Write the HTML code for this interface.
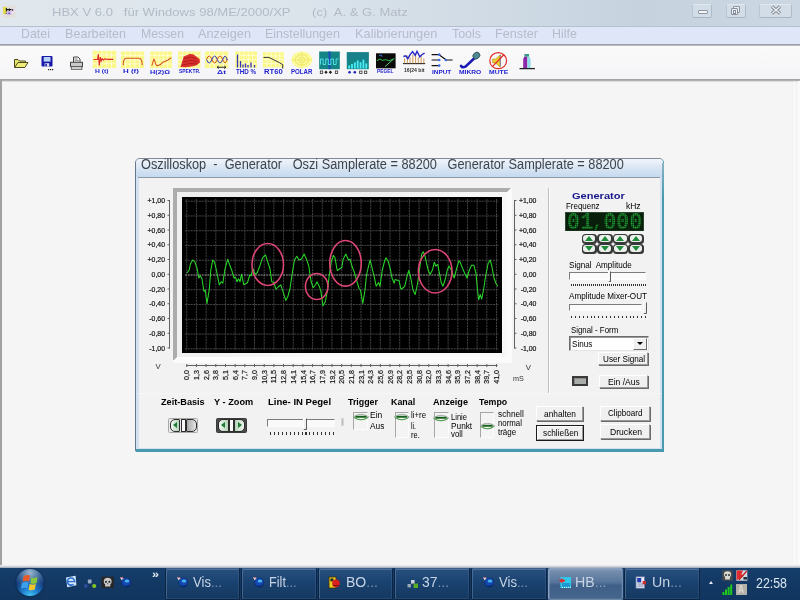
<!DOCTYPE html><html><head><meta charset="utf-8"><title>HBX V 6.0</title><style>
*{margin:0;padding:0;box-sizing:border-box}
html,body{width:800px;height:600px;overflow:hidden;background:#f5f5f5}
body{position:relative;font-family:"Liberation Sans",sans-serif;font-size:11px;color:#000}
.a{position:absolute}
.t{position:absolute;white-space:pre;line-height:1;transform-origin:0 50%}
.btn{position:absolute;background:#f0f0f0;border:1px solid;border-color:#fff #9a9a9a #9a9a9a #fff;box-shadow:1px 1px 0 #6a6a6a}
.tb{position:absolute;top:568px;height:32px;width:75.6px;border:1px solid #0c2444;border-top-color:#3c5e88;border-radius:2px;background:linear-gradient(#28507f,#1a4270 45%,#14385f);box-shadow:inset 1px 1px 0 rgba(160,190,220,.30),inset -1px -1px 0 rgba(160,190,220,.12)}
</style></head><body><div id="w" style="position:absolute;left:0;top:0;width:800px;height:600px;will-change:transform">
<div class="a" style="left:0;top:0;width:800px;height:26px;background:linear-gradient(90deg,#e0e8ed 0%,#dce5ec 35%,#d0dbe5 60%,#c6d3df 80%,#cbd7e2 100%)"></div>
<div class="a" style="left:0;top:26px;width:800px;height:1px;background:#b4c0cf"></div>
<div class="t" style="left:52.00px;top:6.77px;font-size:11.4px;color:#b3bac6;transform:scaleX(1.1452);">HBX V 6.0   für Windows 98/ME/2000/XP      (c)  A. &amp; G. Matz</div>
<div class="a" style="left:0;top:27px;width:800px;height:17px;background:#dfe6f7"></div>
<div class="a" style="left:0;top:43.6px;width:800px;height:2.2px;background:linear-gradient(#8c9098,#c6cad0)"></div>
<div class="t" style="left:21.00px;top:27.66px;font-size:12.4px;color:#b6bcca;transform:scaleX(1.0018);">Datei</div>
<div class="t" style="left:65.00px;top:27.66px;font-size:12.4px;color:#b6bcca;transform:scaleX(1.0170);">Bearbeiten</div>
<div class="t" style="left:141.00px;top:27.66px;font-size:12.4px;color:#b6bcca;transform:scaleX(0.9904);">Messen</div>
<div class="t" style="left:198.00px;top:27.66px;font-size:12.4px;color:#b6bcca;transform:scaleX(1.0250);">Anzeigen</div>
<div class="t" style="left:265.00px;top:27.66px;font-size:12.4px;color:#b6bcca;transform:scaleX(1.0073);">Einstellungen</div>
<div class="t" style="left:354.50px;top:27.66px;font-size:12.4px;color:#b6bcca;transform:scaleX(1.0317);">Kalibrierungen</div>
<div class="t" style="left:452.00px;top:27.66px;font-size:12.4px;color:#b6bcca;transform:scaleX(1.0018);">Tools</div>
<div class="t" style="left:495.00px;top:27.66px;font-size:12.4px;color:#b6bcca;transform:scaleX(1.0229);">Fenster</div>
<div class="t" style="left:552.00px;top:27.66px;font-size:12.4px;color:#b6bcca;transform:scaleX(1.0078);">Hilfe</div>
<div class="a" style="left:0;top:46px;width:800px;height:33px;background:linear-gradient(#fafafb,#f5f5f7)"></div>
<div class="a" style="left:0;top:78.6px;width:800px;height:2px;background:linear-gradient(#9c9c9c,#b8b8b8)"></div>
<div class="a" style="left:0;top:80.5px;width:800px;height:1px;background:#dcdcdc"></div>
<div class="a" style="left:0;top:80px;width:1.7px;height:485.5px;background:#a2a2a2"></div>
<div class="a" style="left:0;top:565px;width:800px;height:3px;background:linear-gradient(#f0f0f0,#dcdee2 40%,#98a4b4)"></div>
<div class="a" style="left:0;top:568px;width:800px;height:32px;background:linear-gradient(#173f6c,#123863 50%,#11355e)"></div>
<div class="a" style="left:692px;top:4px;width:20px;height:14px;border-radius:2px;background:#d3dde7;border:1px solid;border-color:#dfe7ef #aebbc9 #a8b6c4 #b9c5d2"></div>
<div class="a" style="left:697.5px;top:9.5px;width:10px;height:4.5px;background:#f4f6f8;border:1px solid #8c95a1;border-radius:1px"></div>
<div class="a" style="left:726px;top:4px;width:20px;height:14px;border-radius:2px;background:#d3dde7;border:1px solid;border-color:#dfe7ef #aebbc9 #a8b6c4 #b9c5d2"></div>
<div class="a" style="left:733px;top:5.5px;width:7px;height:7px;background:#eef1f4;border:1px solid #8c95a1;border-radius:1px"></div>
<div class="a" style="left:730.5px;top:8px;width:7px;height:7px;background:#eef1f4;border:1px solid #868f9b;border-radius:1px"></div>
<div class="a" style="left:733px;top:10px;width:2.5px;height:3.5px;border:1px solid #868f9b"></div>
<div class="a" style="left:759px;top:4px;width:33px;height:14px;border-radius:2px;background:#d3dde7;border:1px solid;border-color:#dfe7ef #aebbc9 #a8b6c4 #b9c5d2"></div>
<svg class="a" style="left:770px;top:5px" width="12" height="10" viewBox="0 0 12 10"><path d="M2 1.5 L10 8.5 M10 1.5 L2 8.5" stroke="#7f8894" stroke-width="3.2" fill="none"/><path d="M2.3 1.8 L9.7 8.2 M9.7 1.8 L2.3 8.2" stroke="#f2f4f6" stroke-width="1.3" fill="none"/></svg>
<svg class="a" style="left:2px;top:5px" width="14" height="13" viewBox="0 0 14 13"><rect x=".5" y=".5" width="13" height="12" fill="#e2ddd2" opacity=".8"/><rect x="1" y="2" width="4" height="7" fill="#e4dc54"/><rect x="5" y="6" width="4.4" height="4" fill="#d2b8ec"/><rect x="9" y="3" width="4" height="6" fill="#e8dcea"/><path d="M4 4.6h5.6M4.4 3v3.4M7.4 3.4v2.6M10.6 4.2v1.6" stroke="#1c1c1c" stroke-width="1.1"/><path d="M3.6 8.4h1.2M6.4 8.2h1.6" stroke="#3030a0" stroke-width="1"/></svg>
<div class="a" style="left:794px;top:81px;width:1px;height:484px;background:#fbfbfb"></div><div class="a" style="left:798px;top:81px;width:2px;height:484px;background:#fafafa"></div>
<svg class="a" style="left:0;top:0" width="800" height="84" viewBox="0 0 800 84">
<path d="M14.5 67.5 V59.5 h3.5 l1.5 1.5 h6 v2" fill="#e9e36a" stroke="#4a4a20" stroke-width="1"/><path d="M14.5 67.5 l3.5 -5 h10 l-3.2 5 z" fill="#f0ea78" stroke="#4a4a20" stroke-width="1" stroke-linejoin="round"/>
<rect x="41.5" y="56" width="11" height="10.5" rx="1" fill="#1818a8"/><rect x="43.7" y="57" width="6.8" height="4.6" fill="#b8d4f4"/><rect x="44.6" y="63.2" width="4.6" height="3.3" fill="#dfe6f2"/><rect x="45.3" y="63.8" width="1.6" height="2.4" fill="#1818a8"/>
<rect x="48" y="69" width="1.2" height="1.2" fill="#222"/><rect x="50" y="69" width="1.2" height="1.2" fill="#222"/><rect x="52" y="69" width="1.2" height="1.2" fill="#222"/>
<path d="M73.5 62.5 v-5.5 h4.5 l2 2 v3.5" fill="#fff" stroke="#444" stroke-width="1"/><path d="M74.5 59h3M74.5 60.8h4.4" stroke="#555" stroke-width=".8"/><rect x="70.5" y="62.3" width="12" height="4.2" fill="#c9c9c9" stroke="#444" stroke-width="1"/><rect x="71.3" y="66.7" width="10.6" height="2.6" fill="#e2e2e2" stroke="#555" stroke-width=".9"/>
<rect x="92.7" y="50.8" width="23.5" height="17.200000000000003" fill="#fbf88a"/><path d="M97.4 50.8V68" stroke="#fffde0" stroke-width="1" opacity=".75"/><path d="M102.1 50.8V68" stroke="#fffde0" stroke-width="1" opacity=".75"/><path d="M106.8 50.8V68" stroke="#fffde0" stroke-width="1" opacity=".75"/><path d="M111.5 50.8V68" stroke="#fffde0" stroke-width="1" opacity=".75"/><path d="M92.7 55.1H116.2" stroke="#fffde0" stroke-width="1" opacity=".75"/><path d="M92.7 59.4H116.2" stroke="#fffde0" stroke-width="1" opacity=".75"/><path d="M92.7 63.7H116.2" stroke="#fffde0" stroke-width="1" opacity=".75"/>
<path d="M93.5 59.5 h4 l.8 -5.5 l1 11.5 l1 -8.5 l.9 4 l.9 -2.2 l1.2 1.2 q2 -2 3.5 -.6 h6.5" fill="none" stroke="#e02a2a" stroke-width="1.1"/>
<rect x="121" y="51.5" width="23.19999999999999" height="16.5" fill="#fbf88a"/><path d="M125.6 51.5V68" stroke="#fffde0" stroke-width="1" opacity=".75"/><path d="M130.3 51.5V68" stroke="#fffde0" stroke-width="1" opacity=".75"/><path d="M134.9 51.5V68" stroke="#fffde0" stroke-width="1" opacity=".75"/><path d="M139.6 51.5V68" stroke="#fffde0" stroke-width="1" opacity=".75"/><path d="M121 55.6H144.2" stroke="#fffde0" stroke-width="1" opacity=".75"/><path d="M121 59.8H144.2" stroke="#fffde0" stroke-width="1" opacity=".75"/><path d="M121 63.9H144.2" stroke="#fffde0" stroke-width="1" opacity=".75"/>
<path d="M123.3 65.2 v-2.4 q.4 -4.6 3.6 -4.6 h11.6 q3.2 0 3.6 4.6 v2.4" fill="none" stroke="#d8541c" stroke-width="1.1"/>
<rect x="150.2" y="51.5" width="21.80000000000001" height="16.5" fill="#fbf88a"/><path d="M154.6 51.5V68" stroke="#fffde0" stroke-width="1" opacity=".75"/><path d="M158.9 51.5V68" stroke="#fffde0" stroke-width="1" opacity=".75"/><path d="M163.3 51.5V68" stroke="#fffde0" stroke-width="1" opacity=".75"/><path d="M167.6 51.5V68" stroke="#fffde0" stroke-width="1" opacity=".75"/><path d="M150.2 55.6H172" stroke="#fffde0" stroke-width="1" opacity=".75"/><path d="M150.2 59.8H172" stroke="#fffde0" stroke-width="1" opacity=".75"/><path d="M150.2 63.9H172" stroke="#fffde0" stroke-width="1" opacity=".75"/>
<path d="M151.5 65.5 q1 -.3 1.6 -4 q.8 -5 1.8 -.2 q.9 4.5 2.6 4.3 q2.6 0 5 -3 q3 -1.5 5 -2.4 q2.3 -1.2 3.8 -2.6" fill="none" stroke="#d8541c" stroke-width="1.1"/>
<rect x="178" y="51.5" width="22.5" height="16.5" fill="#fbf88a"/><path d="M182.5 51.5V68" stroke="#fffde0" stroke-width="1" opacity=".75"/><path d="M187.0 51.5V68" stroke="#fffde0" stroke-width="1" opacity=".75"/><path d="M191.5 51.5V68" stroke="#fffde0" stroke-width="1" opacity=".75"/><path d="M196.0 51.5V68" stroke="#fffde0" stroke-width="1" opacity=".75"/><path d="M178 55.6H200.5" stroke="#fffde0" stroke-width="1" opacity=".75"/><path d="M178 59.8H200.5" stroke="#fffde0" stroke-width="1" opacity=".75"/><path d="M178 63.9H200.5" stroke="#fffde0" stroke-width="1" opacity=".75"/>
<path d="M180.5 67 l3.2 -10.5 l3 -1.2 l3.5 -1.6 l3.4 .8 l3.4 2.6 l2.6 2 l.4 3.4 l-3.4 2.8 l-5 1.2 l-6 .7 z" fill="#d8302c"/><path d="M184 58.5 l7 -1.5 l5 2 M183 62 l8 -1.6 l6 1.4 M182 65 l8 -1.5 l7 .4" stroke="#a01414" stroke-width=".7" fill="none"/>
<rect x="205" y="51.5" width="23.19999999999999" height="16.5" fill="#fbf88a"/><path d="M209.6 51.5V68" stroke="#fffde0" stroke-width="1" opacity=".75"/><path d="M214.3 51.5V68" stroke="#fffde0" stroke-width="1" opacity=".75"/><path d="M218.9 51.5V68" stroke="#fffde0" stroke-width="1" opacity=".75"/><path d="M223.6 51.5V68" stroke="#fffde0" stroke-width="1" opacity=".75"/><path d="M205 55.6H228.2" stroke="#fffde0" stroke-width="1" opacity=".75"/><path d="M205 59.8H228.2" stroke="#fffde0" stroke-width="1" opacity=".75"/><path d="M205 63.9H228.2" stroke="#fffde0" stroke-width="1" opacity=".75"/>
<path d="M206.5 59.5 q2.7 -7 5.4 0 t5.4 0 t5.4 0 t4.6 -.6" fill="none" stroke="#d8541c" stroke-width="1"/><path d="M206.5 59.5 q2.7 7 5.4 0 t5.4 0 t5.4 0 t4.6 .6" fill="none" stroke="#3838c0" stroke-width="1"/><path d="M217 67.3 h9 M218.8 66 l-1.8 1.3 l1.8 1.3 M224.2 66 l1.8 1.3 l-1.8 1.3" stroke="#222" stroke-width=".9" fill="none"/>
<rect x="235.2" y="51.5" width="21.80000000000001" height="16.200000000000003" fill="#fbf88a"/><path d="M239.6 51.5V67.7" stroke="#fffde0" stroke-width="1" opacity=".75"/><path d="M243.9 51.5V67.7" stroke="#fffde0" stroke-width="1" opacity=".75"/><path d="M248.3 51.5V67.7" stroke="#fffde0" stroke-width="1" opacity=".75"/><path d="M252.6 51.5V67.7" stroke="#fffde0" stroke-width="1" opacity=".75"/><path d="M235.2 55.5H257" stroke="#fffde0" stroke-width="1" opacity=".75"/><path d="M235.2 59.6H257" stroke="#fffde0" stroke-width="1" opacity=".75"/><path d="M235.2 63.7H257" stroke="#fffde0" stroke-width="1" opacity=".75"/>
<path d="M237.5 67.5 v-13 M240.5 67.5 v-6.5 M243 67.5 v-3 M245.5 67.5 v-4 M248 67.5 v-2.5 M251 67.5 v-5 M254.5 67.5 v-2.4" stroke="#3434b8" stroke-width="1.3"/>
<rect x="262.7" y="52.2" width="21.30000000000001" height="15.200000000000003" fill="#fbf88a"/><path d="M267.0 52.2V67.4" stroke="#fffde0" stroke-width="1" opacity=".75"/><path d="M271.2 52.2V67.4" stroke="#fffde0" stroke-width="1" opacity=".75"/><path d="M275.5 52.2V67.4" stroke="#fffde0" stroke-width="1" opacity=".75"/><path d="M279.7 52.2V67.4" stroke="#fffde0" stroke-width="1" opacity=".75"/><path d="M262.7 56.0H284" stroke="#fffde0" stroke-width="1" opacity=".75"/><path d="M262.7 59.8H284" stroke="#fffde0" stroke-width="1" opacity=".75"/><path d="M262.7 63.6H284" stroke="#fffde0" stroke-width="1" opacity=".75"/>
<path d="M263.5 57.4 h5.4 l10.4 5.2 l3.4 2 v4" fill="none" stroke="#333" stroke-width="1"/>
<ellipse cx="301.8" cy="59.8" rx="10.4" ry="8.3" fill="#fbf99a"/><ellipse cx="301.8" cy="59.8" rx="6.6" ry="5.2" fill="none" stroke="#ece25c" stroke-width=".9"/><ellipse cx="301.8" cy="59.8" rx="3.2" ry="2.6" fill="none" stroke="#ece25c" stroke-width=".9"/><path d="M291.4 59.8h20.8M301.8 51.5v16.6" stroke="#f0e868" stroke-width=".8"/>
<rect x="319.2" y="51.5" width="20.6" height="17.7" fill="#148484"/><rect x="328.3" y="51.5" width="2.4" height="17.7" fill="#1a54b4"/><path d="M320.5 64.5 v-5.5 h2.6 v5.5 h2.6 v-5.5 h2.6 v5.5 h2.6 v-5.5 h2.6 v5.5 h2.6 v-5.5 h2.4" fill="none" stroke="#58e8f8" stroke-width=".9"/>
<rect x="320.3" y="71" width="2.4" height="2.4" fill="none" stroke="#333" stroke-width=".8"/><path d="M326 70.6l1.7 1.7l-1.7 1.7l-1.7 -1.7z M330.4 70.6l1.7 1.7l-1.7 1.7l-1.7 -1.7z" fill="#222"/><rect x="335.3" y="71" width="2.4" height="2.4" fill="none" stroke="#333" stroke-width=".8"/>
<rect x="346.8" y="52.2" width="22" height="17" fill="#148484"/><rect x="346.8" y="52.2" width="22" height="8" fill="#1c7c90" opacity=".5"/>
<rect x="348.20" y="65.40" width="1.9" height="3.2" fill="#48e8f4"/>
<rect x="351.05" y="64.00" width="1.9" height="4.6" fill="#48e8f4"/>
<rect x="353.90" y="62.40" width="1.9" height="6.2" fill="#48e8f4"/>
<rect x="356.75" y="60.40" width="1.9" height="8.2" fill="#48e8f4"/>
<rect x="359.60" y="62.20" width="1.9" height="6.4" fill="#48e8f4"/>
<rect x="362.45" y="59.60" width="1.9" height="9" fill="#48e8f4"/>
<rect x="365.30" y="63.40" width="1.9" height="5.2" fill="#48e8f4"/>
<circle cx="349.6" cy="72.3" r="1.3" fill="#1c1cc0"/><circle cx="354.8" cy="72.3" r="1.3" fill="#1c1cc0"/><rect x="359.6" y="71.1" width="2.4" height="2.4" fill="none" stroke="#333" stroke-width=".8"/><rect x="364.4" y="71.1" width="2.4" height="2.4" fill="none" stroke="#333" stroke-width=".8"/>
<rect x="376" y="53.3" width="19.6" height="15" fill="#0a0a0a"/><path d="M377 60.6 l3 -1.6 l2.4 1.4 l3.4 -.8 l3.2 1.2 l5.4 -2.2" fill="none" stroke="#30c050" stroke-width="1"/><path d="M385 66.6 l8.4 -7.4" stroke="#60d878" stroke-width=".9"/><path d="M379 55.8 l2.4 -.8 l.6 1.8" stroke="#3c78e0" stroke-width=".9" fill="none"/>
<path d="M403 63.6 h22.2" stroke="#222" stroke-width="1.1"/>
<path d="M404.60 63.4 v-5" stroke="#c89048" stroke-width=".9"/>
<path d="M407.35 63.4 v-8" stroke="#c89048" stroke-width=".9"/>
<path d="M410.10 63.4 v-6" stroke="#c89048" stroke-width=".9"/>
<path d="M412.85 63.4 v-9" stroke="#c89048" stroke-width=".9"/>
<path d="M415.60 63.4 v-10" stroke="#c89048" stroke-width=".9"/>
<path d="M418.35 63.4 v-6" stroke="#c89048" stroke-width=".9"/>
<path d="M421.10 63.4 v-8" stroke="#c89048" stroke-width=".9"/>
<path d="M423.85 63.4 v-5" stroke="#c89048" stroke-width=".9"/>
<path d="M403.4 56.5 l2.4 -.6 l2 2.8 l2.6 -4.6 l2.2 -2.4 l2.6 3.6 l1.8 -4 l2.8 5.6 l2.2 -2.4 l2.6 -1.4" fill="none" stroke="#2626c8" stroke-width="1.4"/>
<path d="M431.6 54.6 h7 M431.6 60 h7 M431.6 65.6 h7 M446 60 h6.6 M439 54.8 l7 5" stroke="#111" stroke-width="1.2" fill="none"/><circle cx="439.2" cy="54.6" r="1.3" fill="#3c6ce0"/><circle cx="439.2" cy="60" r="1.3" fill="#3c6ce0"/><circle cx="439.2" cy="65.6" r="1.3" fill="#3c6ce0"/><circle cx="445.8" cy="60" r="1.3" fill="#3c6ce0"/>
<path d="M461 65.8 q1.2 2.4 4.4 .8 l9.2 -8.6" fill="none" stroke="#1a1ab4" stroke-width="2.6" stroke-linecap="round"/><ellipse cx="476.4" cy="55.6" rx="3.7" ry="3.1" transform="rotate(-40 476.4 55.6)" fill="#4f8890" stroke="#2c5058" stroke-width=".8"/>
<path d="M492.6 59 h3 l4.6 -4.2 v12.4 l-4.6 -4.2 h-3 z" fill="#f0d030" stroke="#b08810" stroke-width=".6"/><path d="M500.4 55 v11.6" stroke="#8a8a8a" stroke-width="1.2"/><ellipse cx="498.2" cy="60.7" rx="8.4" ry="8" fill="none" stroke="#e02828" stroke-width="1.2"/><path d="M492.4 66.6 l11.4 -11.8" stroke="#e02828" stroke-width="1.3"/>
<path d="M519.5 68.6 h15.4" stroke="#222" stroke-width="1.3"/><path d="M523.2 68 v-9 l1.2 -2.4 h3 v11.4 z" fill="#8c28a8"/><path d="M527.4 68 v-11.4 h1.8 l1.4 2.4 v9 z" fill="#90dce8"/><rect x="524.4" y="54" width="4.6" height="2.6" fill="#3a9a8a"/>
</svg>
<div class="t" style="left:94.50px;top:69.08px;font-size:5.8px;font-weight:bold;color:#2222d0;transform:scaleX(1.1643);">H (t)</div>
<div class="t" style="left:123.20px;top:68.93px;font-size:5.9px;font-weight:bold;color:#2222d0;transform:scaleX(1.3396);">H (f)</div>
<div class="t" style="left:149.80px;top:68.98px;font-size:6.2px;font-weight:bold;color:#2222d0;transform:scaleX(1.1747);">H(2)Ω</div>
<div class="t" style="left:178.80px;top:68.88px;font-size:5.2px;font-weight:bold;color:#2222d0;transform:scaleX(0.9496);">SPEKTR.</div>
<div class="t" style="left:217.00px;top:70.48px;font-size:5.4px;font-weight:bold;color:#2222d0;transform:scaleX(1.5846);">Δt</div>
<div class="t" style="left:235.70px;top:69.28px;font-size:6.4px;font-weight:bold;color:#2222d0;transform:scaleX(0.9747);">THD %</div>
<div class="t" style="left:263.80px;top:67.68px;font-size:7.4px;font-weight:bold;color:#2222d0;transform:scaleX(1.0334);">RT60</div>
<div class="t" style="left:290.80px;top:69.28px;font-size:6.4px;font-weight:bold;color:#2222d0;transform:scaleX(0.9554);">POLAR</div>
<div class="t" style="left:376.80px;top:69.79px;font-size:4.8px;font-weight:bold;color:#2222d0;transform:scaleX(1.0080);">PEGEL</div>
<div class="t" style="left:431.80px;top:70.38px;font-size:5.2px;font-weight:bold;color:#2222d0;transform:scaleX(1.2308);">INPUT</div>
<div class="t" style="left:459.30px;top:70.08px;font-size:5px;font-weight:bold;color:#2222d0;transform:scaleX(1.3321);">MIKRO</div>
<div class="t" style="left:489.30px;top:70.08px;font-size:5px;font-weight:bold;color:#2222d0;transform:scaleX(1.3554);">MUTE</div>
<div class="t" style="left:404.00px;top:68.69px;font-size:4.6px;font-weight:bold;color:#333;transform:scaleX(1.1185);">16|24 bit</div>
<div class="a" style="left:135px;top:158.3px;width:529px;height:294px;border-radius:5px 5px 2px 2px;background:#d3e1f0;border:1px solid;border-color:#7e8a98 #3f97ad #3f97ad #66768a"></div>
<div class="a" style="left:136px;top:159.3px;width:527px;height:17.6px;border-radius:4px 4px 0 0;background:linear-gradient(#f2f5fa,#dde8f4 40%,#c4d9ef)"></div>
<div class="a" style="left:136px;top:449.4px;width:527.6px;height:2.6px;background:#4799ad"></div>
<div class="a" style="left:661.5px;top:163px;width:2.2px;height:289px;background:linear-gradient(#8ab4c6,#4799ad 12%)"></div>
<div class="a" style="left:138px;top:176.8px;width:522.4px;height:1.1px;background:#8e9aa8"></div>
<div class="a" style="left:138.6px;top:177.9px;width:521.6px;height:270px;background:#f2f2f2"></div>
<div class="t" style="left:141.00px;top:157.16px;font-size:14px;color:#3e444e;transform:scaleX(0.9110);">Oszilloskop  -  Generator   Oszi Samplerate = 88200   Generator Samplerate = 88200</div>
<div class="a" style="left:173px;top:188px;width:338.8px;height:175.4px;background:#fbfbfb"></div>
<svg class="a" style="left:173px;top:188px" width="338" height="172"><path d="M0 0 H338 L334 4 H4 V169 L0 173 Z" fill="#acacac"/></svg>
<div class="a" style="left:177px;top:192px;width:330px;height:165px;background:linear-gradient(135deg,#efefef 40%,#f8f8f8 60%)"></div>
<div class="a" style="left:182px;top:197px;width:320px;height:155.5px;background:#000"></div>
<svg class="a" style="left:0;top:0" width="800" height="600" viewBox="0 0 800 600" font-family="Liberation Sans, sans-serif">
<line x1="186.75" y1="199" x2="186.75" y2="350.5" stroke="#424242" stroke-width="1" stroke-dasharray="2 .8"/>
<line x1="196.43" y1="199" x2="196.43" y2="350.5" stroke="#424242" stroke-width="1" stroke-dasharray="2 .8"/>
<line x1="206.11" y1="199" x2="206.11" y2="350.5" stroke="#424242" stroke-width="1" stroke-dasharray="2 .8"/>
<line x1="215.79" y1="199" x2="215.79" y2="350.5" stroke="#424242" stroke-width="1" stroke-dasharray="2 .8"/>
<line x1="225.47" y1="199" x2="225.47" y2="350.5" stroke="#424242" stroke-width="1" stroke-dasharray="2 .8"/>
<line x1="235.15" y1="199" x2="235.15" y2="350.5" stroke="#424242" stroke-width="1" stroke-dasharray="2 .8"/>
<line x1="244.83" y1="199" x2="244.83" y2="350.5" stroke="#424242" stroke-width="1" stroke-dasharray="2 .8"/>
<line x1="254.51" y1="199" x2="254.51" y2="350.5" stroke="#424242" stroke-width="1" stroke-dasharray="2 .8"/>
<line x1="264.19" y1="199" x2="264.19" y2="350.5" stroke="#424242" stroke-width="1" stroke-dasharray="2 .8"/>
<line x1="273.87" y1="199" x2="273.87" y2="350.5" stroke="#424242" stroke-width="1" stroke-dasharray="2 .8"/>
<line x1="283.55" y1="199" x2="283.55" y2="350.5" stroke="#424242" stroke-width="1" stroke-dasharray="2 .8"/>
<line x1="293.23" y1="199" x2="293.23" y2="350.5" stroke="#424242" stroke-width="1" stroke-dasharray="2 .8"/>
<line x1="302.91" y1="199" x2="302.91" y2="350.5" stroke="#424242" stroke-width="1" stroke-dasharray="2 .8"/>
<line x1="312.59" y1="199" x2="312.59" y2="350.5" stroke="#424242" stroke-width="1" stroke-dasharray="2 .8"/>
<line x1="322.27" y1="199" x2="322.27" y2="350.5" stroke="#424242" stroke-width="1" stroke-dasharray="2 .8"/>
<line x1="331.95" y1="199" x2="331.95" y2="350.5" stroke="#424242" stroke-width="1" stroke-dasharray="2 .8"/>
<line x1="341.63" y1="199" x2="341.63" y2="350.5" stroke="#424242" stroke-width="1" stroke-dasharray="2 .8"/>
<line x1="351.31" y1="199" x2="351.31" y2="350.5" stroke="#424242" stroke-width="1" stroke-dasharray="2 .8"/>
<line x1="360.99" y1="199" x2="360.99" y2="350.5" stroke="#424242" stroke-width="1" stroke-dasharray="2 .8"/>
<line x1="370.67" y1="199" x2="370.67" y2="350.5" stroke="#424242" stroke-width="1" stroke-dasharray="2 .8"/>
<line x1="380.35" y1="199" x2="380.35" y2="350.5" stroke="#424242" stroke-width="1" stroke-dasharray="2 .8"/>
<line x1="390.03" y1="199" x2="390.03" y2="350.5" stroke="#424242" stroke-width="1" stroke-dasharray="2 .8"/>
<line x1="399.71" y1="199" x2="399.71" y2="350.5" stroke="#424242" stroke-width="1" stroke-dasharray="2 .8"/>
<line x1="409.39" y1="199" x2="409.39" y2="350.5" stroke="#424242" stroke-width="1" stroke-dasharray="2 .8"/>
<line x1="419.07" y1="199" x2="419.07" y2="350.5" stroke="#424242" stroke-width="1" stroke-dasharray="2 .8"/>
<line x1="428.75" y1="199" x2="428.75" y2="350.5" stroke="#424242" stroke-width="1" stroke-dasharray="2 .8"/>
<line x1="438.43" y1="199" x2="438.43" y2="350.5" stroke="#424242" stroke-width="1" stroke-dasharray="2 .8"/>
<line x1="448.11" y1="199" x2="448.11" y2="350.5" stroke="#424242" stroke-width="1" stroke-dasharray="2 .8"/>
<line x1="457.79" y1="199" x2="457.79" y2="350.5" stroke="#424242" stroke-width="1" stroke-dasharray="2 .8"/>
<line x1="467.47" y1="199" x2="467.47" y2="350.5" stroke="#424242" stroke-width="1" stroke-dasharray="2 .8"/>
<line x1="477.15" y1="199" x2="477.15" y2="350.5" stroke="#424242" stroke-width="1" stroke-dasharray="2 .8"/>
<line x1="486.83" y1="199" x2="486.83" y2="350.5" stroke="#424242" stroke-width="1" stroke-dasharray="2 .8"/>
<line x1="496.51" y1="199" x2="496.51" y2="350.5" stroke="#424242" stroke-width="1" stroke-dasharray="2 .8"/>
<line x1="185" y1="201.20" x2="499" y2="201.20" stroke="#464646" stroke-width="1" stroke-dasharray="2 .8"/>
<line x1="185" y1="215.96" x2="499" y2="215.96" stroke="#464646" stroke-width="1" stroke-dasharray="2 .8"/>
<line x1="185" y1="230.72" x2="499" y2="230.72" stroke="#464646" stroke-width="1" stroke-dasharray="2 .8"/>
<line x1="185" y1="245.48" x2="499" y2="245.48" stroke="#464646" stroke-width="1" stroke-dasharray="2 .8"/>
<line x1="185" y1="260.24" x2="499" y2="260.24" stroke="#464646" stroke-width="1" stroke-dasharray="2 .8"/>
<line x1="185" y1="275.00" x2="499" y2="275.00" stroke="#9c9c9c" stroke-width="1" stroke-dasharray="2 .8"/>
<line x1="185" y1="289.76" x2="499" y2="289.76" stroke="#464646" stroke-width="1" stroke-dasharray="2 .8"/>
<line x1="185" y1="304.52" x2="499" y2="304.52" stroke="#464646" stroke-width="1" stroke-dasharray="2 .8"/>
<line x1="185" y1="319.28" x2="499" y2="319.28" stroke="#464646" stroke-width="1" stroke-dasharray="2 .8"/>
<line x1="185" y1="334.04" x2="499" y2="334.04" stroke="#464646" stroke-width="1" stroke-dasharray="2 .8"/>
<line x1="185" y1="348.80" x2="499" y2="348.80" stroke="#464646" stroke-width="1" stroke-dasharray="2 .8"/>
<polyline fill="none" stroke="#2ad82a" stroke-width="1.05" stroke-linejoin="round" points="186.8,272.8 189.0,270.5 190.5,263.8 192.8,260.0 195.0,262.2 197.2,269.0 198.8,278.0 200.2,275.8 201.8,278.0 204.0,291.5 205.2,290.0 207.0,303.5 209.2,290.0 210.8,270.5 212.7,260.0 214.5,262.2 216.8,272.0 219.3,284.8 221.2,281.8 222.8,283.2 225.0,269.0 227.7,259.2 229.5,264.5 231.8,270.5 234.0,278.0 235.5,277.2 237.0,281.8 238.5,278.8 240.0,281.8 241.5,274.2 243.8,284.8 245.2,284.0 247.5,282.5 249.8,275.0 251.2,275.8 252.8,268.2 255.0,274.2 257.2,272.8 259.5,266.8 262.5,257.8 265.5,254.8 267.8,262.2 270.0,269.0 271.8,281.8 273.8,282.5 276.0,289.2 278.2,287.0 280.8,284.8 282.8,290.8 285.8,300.5 288.0,296.0 290.0,288.5 292.2,273.5 294.5,260.0 296.8,256.2 299.0,260.0 301.2,259.2 304.2,254.0 306.5,259.2 308.8,266.0 311.0,281.0 313.2,287.8 315.5,284.8 317.0,281.8 319.2,286.2 320.8,290.8 323.0,305.8 325.2,302.0 327.5,290.0 329.3,275.0 331.2,262.2 333.5,255.5 335.0,257.8 337.2,270.5 339.5,269.0 341.8,267.5 343.2,259.2 345.8,254.0 348.5,260.0 350.0,259.2 352.2,266.8 354.5,272.8 356.8,281.0 359.0,288.5 360.5,290.0 362.8,303.5 365.0,290.0 366.5,275.0 368.8,265.2 370.2,260.0 372.5,269.8 374.0,275.8 376.2,286.2 378.5,282.5 380.0,286.2 382.2,270.5 384.5,261.5 386.0,257.8 388.2,261.5 390.5,269.8 392.0,278.0 394.2,283.2 395.0,279.5 397.2,280.2 398.8,280.2 401.0,289.2 403.2,287.8 404.8,286.2 407.0,276.5 408.8,270.5 410.8,278.0 413.0,290.0 415.2,294.5 417.5,284.0 419.8,267.5 421.7,254.0 423.2,251.8 425.0,256.2 426.8,264.5 428.3,270.5 430.2,274.2 432.5,269.8 434.3,262.2 435.8,266.0 437.8,264.5 439.2,272.0 441.2,282.5 443.0,286.2 445.2,279.5 447.2,270.5 449.0,266.0 450.8,269.0 452.8,274.2 454.2,278.0 456.5,269.0 458.8,260.8 460.2,262.2 462.5,268.2 464.8,273.5 467.0,278.0 469.2,270.5 471.5,265.2 473.8,265.2 476.0,273.5 477.5,290.0 478.7,299.8 480.2,294.5 481.7,299.0 483.5,290.0 485.8,275.0 488.0,263.8 490.2,260.0 491.8,266.0 494.0,278.0 496.2,284.0 497.8,286.2"/>
<ellipse cx="267.75" cy="264.5" rx="15.75" ry="21" fill="none" stroke="#dc4674" stroke-width="1.6"/>
<ellipse cx="316.7" cy="286.5" rx="11.25" ry="13" fill="none" stroke="#dc4674" stroke-width="1.6"/>
<ellipse cx="345.5" cy="263.3" rx="15.75" ry="22.8" fill="none" stroke="#dc4674" stroke-width="1.6"/>
<ellipse cx="435.2" cy="271.25" rx="16.8" ry="21.75" fill="none" stroke="#dc4674" stroke-width="1.6"/>
<line x1="169.5" y1="200" x2="169.5" y2="348.4" stroke="#606060" stroke-width="1"/>
<line x1="514.5" y1="200" x2="514.5" y2="348.4" stroke="#606060" stroke-width="1"/>
<line x1="167.5" y1="200.50" x2="170" y2="200.50" stroke="#606060" stroke-width="1"/>
<line x1="514" y1="200.50" x2="516.5" y2="200.50" stroke="#606060" stroke-width="1"/>
<line x1="167.5" y1="215.25" x2="170" y2="215.25" stroke="#606060" stroke-width="1"/>
<line x1="514" y1="215.25" x2="516.5" y2="215.25" stroke="#606060" stroke-width="1"/>
<line x1="167.5" y1="230.00" x2="170" y2="230.00" stroke="#606060" stroke-width="1"/>
<line x1="514" y1="230.00" x2="516.5" y2="230.00" stroke="#606060" stroke-width="1"/>
<line x1="167.5" y1="244.75" x2="170" y2="244.75" stroke="#606060" stroke-width="1"/>
<line x1="514" y1="244.75" x2="516.5" y2="244.75" stroke="#606060" stroke-width="1"/>
<line x1="167.5" y1="259.50" x2="170" y2="259.50" stroke="#606060" stroke-width="1"/>
<line x1="514" y1="259.50" x2="516.5" y2="259.50" stroke="#606060" stroke-width="1"/>
<line x1="167.5" y1="274.25" x2="170" y2="274.25" stroke="#606060" stroke-width="1"/>
<line x1="514" y1="274.25" x2="516.5" y2="274.25" stroke="#606060" stroke-width="1"/>
<line x1="167.5" y1="289.00" x2="170" y2="289.00" stroke="#606060" stroke-width="1"/>
<line x1="514" y1="289.00" x2="516.5" y2="289.00" stroke="#606060" stroke-width="1"/>
<line x1="167.5" y1="303.75" x2="170" y2="303.75" stroke="#606060" stroke-width="1"/>
<line x1="514" y1="303.75" x2="516.5" y2="303.75" stroke="#606060" stroke-width="1"/>
<line x1="167.5" y1="318.50" x2="170" y2="318.50" stroke="#606060" stroke-width="1"/>
<line x1="514" y1="318.50" x2="516.5" y2="318.50" stroke="#606060" stroke-width="1"/>
<line x1="167.5" y1="333.25" x2="170" y2="333.25" stroke="#606060" stroke-width="1"/>
<line x1="514" y1="333.25" x2="516.5" y2="333.25" stroke="#606060" stroke-width="1"/>
<line x1="167.5" y1="348.00" x2="170" y2="348.00" stroke="#606060" stroke-width="1"/>
<line x1="514" y1="348.00" x2="516.5" y2="348.00" stroke="#606060" stroke-width="1"/>
<line x1="186.3" y1="365.5" x2="497.5" y2="365.5" stroke="#606060" stroke-width="1"/>
<line x1="186.75" y1="364" x2="186.75" y2="367" stroke="#606060" stroke-width="1"/>
<line x1="196.43" y1="364" x2="196.43" y2="367" stroke="#606060" stroke-width="1"/>
<line x1="206.11" y1="364" x2="206.11" y2="367" stroke="#606060" stroke-width="1"/>
<line x1="215.79" y1="364" x2="215.79" y2="367" stroke="#606060" stroke-width="1"/>
<line x1="225.47" y1="364" x2="225.47" y2="367" stroke="#606060" stroke-width="1"/>
<line x1="235.15" y1="364" x2="235.15" y2="367" stroke="#606060" stroke-width="1"/>
<line x1="244.83" y1="364" x2="244.83" y2="367" stroke="#606060" stroke-width="1"/>
<line x1="254.51" y1="364" x2="254.51" y2="367" stroke="#606060" stroke-width="1"/>
<line x1="264.19" y1="364" x2="264.19" y2="367" stroke="#606060" stroke-width="1"/>
<line x1="273.87" y1="364" x2="273.87" y2="367" stroke="#606060" stroke-width="1"/>
<line x1="283.55" y1="364" x2="283.55" y2="367" stroke="#606060" stroke-width="1"/>
<line x1="293.23" y1="364" x2="293.23" y2="367" stroke="#606060" stroke-width="1"/>
<line x1="302.91" y1="364" x2="302.91" y2="367" stroke="#606060" stroke-width="1"/>
<line x1="312.59" y1="364" x2="312.59" y2="367" stroke="#606060" stroke-width="1"/>
<line x1="322.27" y1="364" x2="322.27" y2="367" stroke="#606060" stroke-width="1"/>
<line x1="331.95" y1="364" x2="331.95" y2="367" stroke="#606060" stroke-width="1"/>
<line x1="341.63" y1="364" x2="341.63" y2="367" stroke="#606060" stroke-width="1"/>
<line x1="351.31" y1="364" x2="351.31" y2="367" stroke="#606060" stroke-width="1"/>
<line x1="360.99" y1="364" x2="360.99" y2="367" stroke="#606060" stroke-width="1"/>
<line x1="370.67" y1="364" x2="370.67" y2="367" stroke="#606060" stroke-width="1"/>
<line x1="380.35" y1="364" x2="380.35" y2="367" stroke="#606060" stroke-width="1"/>
<line x1="390.03" y1="364" x2="390.03" y2="367" stroke="#606060" stroke-width="1"/>
<line x1="399.71" y1="364" x2="399.71" y2="367" stroke="#606060" stroke-width="1"/>
<line x1="409.39" y1="364" x2="409.39" y2="367" stroke="#606060" stroke-width="1"/>
<line x1="419.07" y1="364" x2="419.07" y2="367" stroke="#606060" stroke-width="1"/>
<line x1="428.75" y1="364" x2="428.75" y2="367" stroke="#606060" stroke-width="1"/>
<line x1="438.43" y1="364" x2="438.43" y2="367" stroke="#606060" stroke-width="1"/>
<line x1="448.11" y1="364" x2="448.11" y2="367" stroke="#606060" stroke-width="1"/>
<line x1="457.79" y1="364" x2="457.79" y2="367" stroke="#606060" stroke-width="1"/>
<line x1="467.47" y1="364" x2="467.47" y2="367" stroke="#606060" stroke-width="1"/>
<line x1="477.15" y1="364" x2="477.15" y2="367" stroke="#606060" stroke-width="1"/>
<line x1="486.83" y1="364" x2="486.83" y2="367" stroke="#606060" stroke-width="1"/>
<line x1="496.51" y1="364" x2="496.51" y2="367" stroke="#606060" stroke-width="1"/>
<text x="165" y="203.2" font-size="6.9" text-anchor="end" fill="#111" stroke="#222" stroke-width=".22">+1,00</text>
<text x="536.4" y="203.2" font-size="6.9" text-anchor="end" fill="#111" stroke="#222" stroke-width=".22">+1,00</text>
<text x="165" y="217.9" font-size="6.9" text-anchor="end" fill="#111" stroke="#222" stroke-width=".22">+0,80</text>
<text x="536.4" y="217.9" font-size="6.9" text-anchor="end" fill="#111" stroke="#222" stroke-width=".22">+0,80</text>
<text x="165" y="232.7" font-size="6.9" text-anchor="end" fill="#111" stroke="#222" stroke-width=".22">+0,60</text>
<text x="536.4" y="232.7" font-size="6.9" text-anchor="end" fill="#111" stroke="#222" stroke-width=".22">+0,60</text>
<text x="165" y="247.4" font-size="6.9" text-anchor="end" fill="#111" stroke="#222" stroke-width=".22">+0,40</text>
<text x="536.4" y="247.4" font-size="6.9" text-anchor="end" fill="#111" stroke="#222" stroke-width=".22">+0,40</text>
<text x="165" y="262.2" font-size="6.9" text-anchor="end" fill="#111" stroke="#222" stroke-width=".22">+0,20</text>
<text x="536.4" y="262.2" font-size="6.9" text-anchor="end" fill="#111" stroke="#222" stroke-width=".22">+0,20</text>
<text x="165" y="276.9" font-size="6.9" text-anchor="end" fill="#111" stroke="#222" stroke-width=".22">0,00</text>
<text x="536.4" y="276.9" font-size="6.9" text-anchor="end" fill="#111" stroke="#222" stroke-width=".22">0,00</text>
<text x="165" y="291.7" font-size="6.9" text-anchor="end" fill="#111" stroke="#222" stroke-width=".22">-0,20</text>
<text x="536.4" y="291.7" font-size="6.9" text-anchor="end" fill="#111" stroke="#222" stroke-width=".22">-0,20</text>
<text x="165" y="306.4" font-size="6.9" text-anchor="end" fill="#111" stroke="#222" stroke-width=".22">-0,40</text>
<text x="536.4" y="306.4" font-size="6.9" text-anchor="end" fill="#111" stroke="#222" stroke-width=".22">-0,40</text>
<text x="165" y="321.2" font-size="6.9" text-anchor="end" fill="#111" stroke="#222" stroke-width=".22">-0,60</text>
<text x="536.4" y="321.2" font-size="6.9" text-anchor="end" fill="#111" stroke="#222" stroke-width=".22">-0,60</text>
<text x="165" y="335.9" font-size="6.9" text-anchor="end" fill="#111" stroke="#222" stroke-width=".22">-0,80</text>
<text x="536.4" y="335.9" font-size="6.9" text-anchor="end" fill="#111" stroke="#222" stroke-width=".22">-0,80</text>
<text x="165" y="350.7" font-size="6.9" text-anchor="end" fill="#111" stroke="#222" stroke-width=".22">-1,00</text>
<text x="536.4" y="350.7" font-size="6.9" text-anchor="end" fill="#111" stroke="#222" stroke-width=".22">-1,00</text>
<text transform="translate(189.35,370) rotate(-90)" text-anchor="end" font-size="7.1" fill="#111" stroke="#222" stroke-width=".2">0,0</text>
<text transform="translate(199.03,370) rotate(-90)" text-anchor="end" font-size="7.1" fill="#111" stroke="#222" stroke-width=".2">1,3</text>
<text transform="translate(208.71,370) rotate(-90)" text-anchor="end" font-size="7.1" fill="#111" stroke="#222" stroke-width=".2">2,6</text>
<text transform="translate(218.39,370) rotate(-90)" text-anchor="end" font-size="7.1" fill="#111" stroke="#222" stroke-width=".2">3,8</text>
<text transform="translate(228.07,370) rotate(-90)" text-anchor="end" font-size="7.1" fill="#111" stroke="#222" stroke-width=".2">5,1</text>
<text transform="translate(237.75,370) rotate(-90)" text-anchor="end" font-size="7.1" fill="#111" stroke="#222" stroke-width=".2">6,4</text>
<text transform="translate(247.43,370) rotate(-90)" text-anchor="end" font-size="7.1" fill="#111" stroke="#222" stroke-width=".2">7,7</text>
<text transform="translate(257.11,370) rotate(-90)" text-anchor="end" font-size="7.1" fill="#111" stroke="#222" stroke-width=".2">9,0</text>
<text transform="translate(266.79,370) rotate(-90)" text-anchor="end" font-size="7.1" fill="#111" stroke="#222" stroke-width=".2">10,3</text>
<text transform="translate(276.47,370) rotate(-90)" text-anchor="end" font-size="7.1" fill="#111" stroke="#222" stroke-width=".2">11,5</text>
<text transform="translate(286.15,370) rotate(-90)" text-anchor="end" font-size="7.1" fill="#111" stroke="#222" stroke-width=".2">12,8</text>
<text transform="translate(295.83,370) rotate(-90)" text-anchor="end" font-size="7.1" fill="#111" stroke="#222" stroke-width=".2">14,1</text>
<text transform="translate(305.51,370) rotate(-90)" text-anchor="end" font-size="7.1" fill="#111" stroke="#222" stroke-width=".2">15,4</text>
<text transform="translate(315.19,370) rotate(-90)" text-anchor="end" font-size="7.1" fill="#111" stroke="#222" stroke-width=".2">16,7</text>
<text transform="translate(324.87,370) rotate(-90)" text-anchor="end" font-size="7.1" fill="#111" stroke="#222" stroke-width=".2">17,9</text>
<text transform="translate(334.55,370) rotate(-90)" text-anchor="end" font-size="7.1" fill="#111" stroke="#222" stroke-width=".2">19,2</text>
<text transform="translate(344.23,370) rotate(-90)" text-anchor="end" font-size="7.1" fill="#111" stroke="#222" stroke-width=".2">20,5</text>
<text transform="translate(353.91,370) rotate(-90)" text-anchor="end" font-size="7.1" fill="#111" stroke="#222" stroke-width=".2">21,8</text>
<text transform="translate(363.59,370) rotate(-90)" text-anchor="end" font-size="7.1" fill="#111" stroke="#222" stroke-width=".2">23,1</text>
<text transform="translate(373.27,370) rotate(-90)" text-anchor="end" font-size="7.1" fill="#111" stroke="#222" stroke-width=".2">24,3</text>
<text transform="translate(382.95,370) rotate(-90)" text-anchor="end" font-size="7.1" fill="#111" stroke="#222" stroke-width=".2">25,6</text>
<text transform="translate(392.63,370) rotate(-90)" text-anchor="end" font-size="7.1" fill="#111" stroke="#222" stroke-width=".2">26,9</text>
<text transform="translate(402.31,370) rotate(-90)" text-anchor="end" font-size="7.1" fill="#111" stroke="#222" stroke-width=".2">28,2</text>
<text transform="translate(411.99,370) rotate(-90)" text-anchor="end" font-size="7.1" fill="#111" stroke="#222" stroke-width=".2">29,5</text>
<text transform="translate(421.67,370) rotate(-90)" text-anchor="end" font-size="7.1" fill="#111" stroke="#222" stroke-width=".2">30,8</text>
<text transform="translate(431.35,370) rotate(-90)" text-anchor="end" font-size="7.1" fill="#111" stroke="#222" stroke-width=".2">32,0</text>
<text transform="translate(441.03,370) rotate(-90)" text-anchor="end" font-size="7.1" fill="#111" stroke="#222" stroke-width=".2">33,3</text>
<text transform="translate(450.71,370) rotate(-90)" text-anchor="end" font-size="7.1" fill="#111" stroke="#222" stroke-width=".2">34,6</text>
<text transform="translate(460.39,370) rotate(-90)" text-anchor="end" font-size="7.1" fill="#111" stroke="#222" stroke-width=".2">35,9</text>
<text transform="translate(470.07,370) rotate(-90)" text-anchor="end" font-size="7.1" fill="#111" stroke="#222" stroke-width=".2">37,2</text>
<text transform="translate(479.75,370) rotate(-90)" text-anchor="end" font-size="7.1" fill="#111" stroke="#222" stroke-width=".2">38,4</text>
<text transform="translate(489.43,370) rotate(-90)" text-anchor="end" font-size="7.1" fill="#111" stroke="#222" stroke-width=".2">39,7</text>
<text transform="translate(499.11,370) rotate(-90)" text-anchor="end" font-size="7.1" fill="#111" stroke="#222" stroke-width=".2">41,0</text>
<text x="155.6" y="369.3" font-size="7.8" fill="#333">V</text>
<text x="525.8" y="369.5" font-size="7.8" fill="#333">V</text>
<text x="513" y="380.5" font-size="7.2" fill="#333">mS</text>
</svg>
<div class="a" style="left:548px;top:188px;width:1px;height:205px;background:#c0c0c0"></div>
<div class="a" style="left:549px;top:188px;width:1px;height:205px;background:#fdfdfd"></div>
<div class="a" style="left:138px;top:393px;width:523px;height:1px;background:#f6f6f6"></div>
<div class="t" style="left:572.00px;top:190.52px;font-size:9.7px;font-weight:bold;color:#16168c;transform:scaleX(1.1389);">Generator</div>
<div class="t" style="left:566.00px;top:200.87px;font-size:9.8px;color:#000;transform:scaleX(0.8116);">Frequenz</div>
<div class="t" style="left:626.20px;top:200.87px;font-size:9.8px;color:#000;transform:scaleX(0.8651);">kHz</div>
<div class="a" style="left:565.1px;top:212px;width:78.8px;height:19.2px;background:#0a200c;border:1px solid #2c4a30"></div>
<svg class="a" style="left:565px;top:212px" width="80" height="20" viewBox="565 212 80 20" font-family="Liberation Mono, monospace" font-weight="bold" font-size="23" fill="#22aa38" text-anchor="middle"><text x="573.5" y="229.3" transform="translate(573.5 0) scale(.96 1) translate(-573.5 0)">0</text><text x="587" y="229.3" transform="translate(587 0) scale(.96 1) translate(-587 0)">1</text><text x="597.6" y="226.6" font-size="17">,</text><text x="609.8" y="229.3" transform="translate(609.8 0) scale(.96 1) translate(-609.8 0)">0</text><text x="622.7" y="229.3" transform="translate(622.7 0) scale(.96 1) translate(-622.7 0)">0</text><text x="636" y="229.3" transform="translate(636 0) scale(.96 1) translate(-636 0)">0</text><path d="M566.90 213V231" stroke="#0a200c" stroke-width=".75" opacity=".7"/><path d="M568.83 213V231" stroke="#0a200c" stroke-width=".75" opacity=".7"/><path d="M570.76 213V231" stroke="#0a200c" stroke-width=".75" opacity=".7"/><path d="M572.69 213V231" stroke="#0a200c" stroke-width=".75" opacity=".7"/><path d="M574.62 213V231" stroke="#0a200c" stroke-width=".75" opacity=".7"/><path d="M576.55 213V231" stroke="#0a200c" stroke-width=".75" opacity=".7"/><path d="M578.48 213V231" stroke="#0a200c" stroke-width=".75" opacity=".7"/><path d="M580.41 213V231" stroke="#0a200c" stroke-width=".75" opacity=".7"/><path d="M582.34 213V231" stroke="#0a200c" stroke-width=".75" opacity=".7"/><path d="M584.27 213V231" stroke="#0a200c" stroke-width=".75" opacity=".7"/><path d="M586.20 213V231" stroke="#0a200c" stroke-width=".75" opacity=".7"/><path d="M588.13 213V231" stroke="#0a200c" stroke-width=".75" opacity=".7"/><path d="M590.06 213V231" stroke="#0a200c" stroke-width=".75" opacity=".7"/><path d="M591.99 213V231" stroke="#0a200c" stroke-width=".75" opacity=".7"/><path d="M593.92 213V231" stroke="#0a200c" stroke-width=".75" opacity=".7"/><path d="M595.85 213V231" stroke="#0a200c" stroke-width=".75" opacity=".7"/><path d="M597.78 213V231" stroke="#0a200c" stroke-width=".75" opacity=".7"/><path d="M599.71 213V231" stroke="#0a200c" stroke-width=".75" opacity=".7"/><path d="M601.64 213V231" stroke="#0a200c" stroke-width=".75" opacity=".7"/><path d="M603.57 213V231" stroke="#0a200c" stroke-width=".75" opacity=".7"/><path d="M605.50 213V231" stroke="#0a200c" stroke-width=".75" opacity=".7"/><path d="M607.43 213V231" stroke="#0a200c" stroke-width=".75" opacity=".7"/><path d="M609.36 213V231" stroke="#0a200c" stroke-width=".75" opacity=".7"/><path d="M611.29 213V231" stroke="#0a200c" stroke-width=".75" opacity=".7"/><path d="M613.22 213V231" stroke="#0a200c" stroke-width=".75" opacity=".7"/><path d="M615.15 213V231" stroke="#0a200c" stroke-width=".75" opacity=".7"/><path d="M617.08 213V231" stroke="#0a200c" stroke-width=".75" opacity=".7"/><path d="M619.01 213V231" stroke="#0a200c" stroke-width=".75" opacity=".7"/><path d="M620.94 213V231" stroke="#0a200c" stroke-width=".75" opacity=".7"/><path d="M622.87 213V231" stroke="#0a200c" stroke-width=".75" opacity=".7"/><path d="M624.80 213V231" stroke="#0a200c" stroke-width=".75" opacity=".7"/><path d="M626.73 213V231" stroke="#0a200c" stroke-width=".75" opacity=".7"/><path d="M628.66 213V231" stroke="#0a200c" stroke-width=".75" opacity=".7"/><path d="M630.59 213V231" stroke="#0a200c" stroke-width=".75" opacity=".7"/><path d="M632.52 213V231" stroke="#0a200c" stroke-width=".75" opacity=".7"/><path d="M634.45 213V231" stroke="#0a200c" stroke-width=".75" opacity=".7"/><path d="M636.38 213V231" stroke="#0a200c" stroke-width=".75" opacity=".7"/><path d="M638.31 213V231" stroke="#0a200c" stroke-width=".75" opacity=".7"/><path d="M640.24 213V231" stroke="#0a200c" stroke-width=".75" opacity=".7"/><path d="M642.17 213V231" stroke="#0a200c" stroke-width=".75" opacity=".7"/><path d="M566 214.90H643.5" stroke="#0a200c" stroke-width=".75" opacity=".7"/><path d="M566 216.83H643.5" stroke="#0a200c" stroke-width=".75" opacity=".7"/><path d="M566 218.76H643.5" stroke="#0a200c" stroke-width=".75" opacity=".7"/><path d="M566 220.69H643.5" stroke="#0a200c" stroke-width=".75" opacity=".7"/><path d="M566 222.62H643.5" stroke="#0a200c" stroke-width=".75" opacity=".7"/><path d="M566 224.55H643.5" stroke="#0a200c" stroke-width=".75" opacity=".7"/><path d="M566 226.48H643.5" stroke="#0a200c" stroke-width=".75" opacity=".7"/><path d="M566 228.41H643.5" stroke="#0a200c" stroke-width=".75" opacity=".7"/><path d="M566 230.34H643.5" stroke="#0a200c" stroke-width=".75" opacity=".7"/></svg>
<div class="a" style="left:581.5px;top:233.5px;width:15.6px;height:10.2px;background:#383838;border-radius:3.5px"></div>
<div class="a" style="left:583.1px;top:234.9px;width:12.4px;height:7.4px;background:#eaf0ea;border-radius:3px"></div>
<div class="a" style="left:585.3px;top:236.1px;width:0;height:0;border-left:4px solid transparent;border-right:4px solid transparent;border-bottom:5px solid #1f8a3a"></div>
<div class="a" style="left:581.5px;top:243.5px;width:15.6px;height:10.2px;background:#383838;border-radius:3.5px"></div>
<div class="a" style="left:583.1px;top:244.9px;width:12.4px;height:7.4px;background:#eaf0ea;border-radius:3px"></div>
<div class="a" style="left:585.3px;top:246.3px;width:0;height:0;border-left:4px solid transparent;border-right:4px solid transparent;border-top:5px solid #1f8a3a"></div>
<div class="a" style="left:597.0px;top:233.5px;width:15.6px;height:10.2px;background:#383838;border-radius:3.5px"></div>
<div class="a" style="left:598.6px;top:234.9px;width:12.4px;height:7.4px;background:#eaf0ea;border-radius:3px"></div>
<div class="a" style="left:600.8px;top:236.1px;width:0;height:0;border-left:4px solid transparent;border-right:4px solid transparent;border-bottom:5px solid #1f8a3a"></div>
<div class="a" style="left:597.0px;top:243.5px;width:15.6px;height:10.2px;background:#383838;border-radius:3.5px"></div>
<div class="a" style="left:598.6px;top:244.9px;width:12.4px;height:7.4px;background:#eaf0ea;border-radius:3px"></div>
<div class="a" style="left:600.8px;top:246.3px;width:0;height:0;border-left:4px solid transparent;border-right:4px solid transparent;border-top:5px solid #1f8a3a"></div>
<div class="a" style="left:612.6px;top:233.5px;width:15.6px;height:10.2px;background:#383838;border-radius:3.5px"></div>
<div class="a" style="left:614.2px;top:234.9px;width:12.4px;height:7.4px;background:#eaf0ea;border-radius:3px"></div>
<div class="a" style="left:616.4px;top:236.1px;width:0;height:0;border-left:4px solid transparent;border-right:4px solid transparent;border-bottom:5px solid #1f8a3a"></div>
<div class="a" style="left:612.6px;top:243.5px;width:15.6px;height:10.2px;background:#383838;border-radius:3.5px"></div>
<div class="a" style="left:614.2px;top:244.9px;width:12.4px;height:7.4px;background:#eaf0ea;border-radius:3px"></div>
<div class="a" style="left:616.4px;top:246.3px;width:0;height:0;border-left:4px solid transparent;border-right:4px solid transparent;border-top:5px solid #1f8a3a"></div>
<div class="a" style="left:628.1px;top:233.5px;width:15.6px;height:10.2px;background:#383838;border-radius:3.5px"></div>
<div class="a" style="left:629.8px;top:234.9px;width:12.4px;height:7.4px;background:#eaf0ea;border-radius:3px"></div>
<div class="a" style="left:631.9px;top:236.1px;width:0;height:0;border-left:4px solid transparent;border-right:4px solid transparent;border-bottom:5px solid #1f8a3a"></div>
<div class="a" style="left:628.1px;top:243.5px;width:15.6px;height:10.2px;background:#383838;border-radius:3.5px"></div>
<div class="a" style="left:629.8px;top:244.9px;width:12.4px;height:7.4px;background:#eaf0ea;border-radius:3px"></div>
<div class="a" style="left:631.9px;top:246.3px;width:0;height:0;border-left:4px solid transparent;border-right:4px solid transparent;border-top:5px solid #1f8a3a"></div>
<div class="t" style="left:569.20px;top:259.67px;font-size:9.8px;color:#000;transform:scaleX(0.8293);">Signal  Amplitude</div>
<div class="a" style="left:568.8px;top:272.3px;width:77px;height:7.6px;background:#fafafa;border:1px solid;border-color:#7c7c7c #fcfcfc #fcfcfc #7c7c7c"></div>
<div class="a" style="left:607.8px;top:270.7px;width:3.4px;height:11.5px;background:#f0f0f0;border:1px solid;border-color:#fff #5c5c5c #5c5c5c #fff;border-radius:0 0 1.5px 1.5px"></div>
<div class="a" style="left:571.00px;top:284.4px;width:1.1px;height:2px;background:#303030"></div>
<div class="a" style="left:573.00px;top:284.4px;width:1.1px;height:2px;background:#303030"></div>
<div class="a" style="left:575.00px;top:284.4px;width:1.1px;height:2px;background:#303030"></div>
<div class="a" style="left:577.00px;top:284.4px;width:1.1px;height:2px;background:#303030"></div>
<div class="a" style="left:579.00px;top:284.4px;width:1.1px;height:2px;background:#303030"></div>
<div class="a" style="left:581.00px;top:284.4px;width:1.1px;height:2px;background:#303030"></div>
<div class="a" style="left:583.00px;top:284.4px;width:1.1px;height:2px;background:#303030"></div>
<div class="a" style="left:585.00px;top:284.4px;width:1.1px;height:2px;background:#303030"></div>
<div class="a" style="left:587.00px;top:284.4px;width:1.1px;height:2px;background:#303030"></div>
<div class="a" style="left:589.00px;top:284.4px;width:1.1px;height:2px;background:#303030"></div>
<div class="a" style="left:591.00px;top:284.4px;width:1.1px;height:2px;background:#303030"></div>
<div class="a" style="left:593.00px;top:284.4px;width:1.1px;height:2px;background:#303030"></div>
<div class="a" style="left:595.00px;top:284.4px;width:1.1px;height:2px;background:#303030"></div>
<div class="a" style="left:597.00px;top:284.4px;width:1.1px;height:2px;background:#303030"></div>
<div class="a" style="left:599.00px;top:284.4px;width:1.1px;height:2px;background:#303030"></div>
<div class="a" style="left:601.00px;top:284.4px;width:1.1px;height:2px;background:#303030"></div>
<div class="a" style="left:603.00px;top:284.4px;width:1.1px;height:2px;background:#303030"></div>
<div class="a" style="left:605.00px;top:284.4px;width:1.1px;height:2px;background:#303030"></div>
<div class="a" style="left:607.00px;top:284.4px;width:1.1px;height:2px;background:#303030"></div>
<div class="a" style="left:609.00px;top:284.4px;width:1.1px;height:2px;background:#303030"></div>
<div class="a" style="left:611.00px;top:284.4px;width:1.1px;height:2px;background:#303030"></div>
<div class="a" style="left:613.00px;top:284.4px;width:1.1px;height:2px;background:#303030"></div>
<div class="a" style="left:615.00px;top:284.4px;width:1.1px;height:2px;background:#303030"></div>
<div class="a" style="left:617.00px;top:284.4px;width:1.1px;height:2px;background:#303030"></div>
<div class="a" style="left:619.00px;top:284.4px;width:1.1px;height:2px;background:#303030"></div>
<div class="a" style="left:621.00px;top:284.4px;width:1.1px;height:2px;background:#303030"></div>
<div class="a" style="left:623.00px;top:284.4px;width:1.1px;height:2px;background:#303030"></div>
<div class="a" style="left:625.00px;top:284.4px;width:1.1px;height:2px;background:#303030"></div>
<div class="a" style="left:627.00px;top:284.4px;width:1.1px;height:2px;background:#303030"></div>
<div class="a" style="left:629.00px;top:284.4px;width:1.1px;height:2px;background:#303030"></div>
<div class="a" style="left:631.00px;top:284.4px;width:1.1px;height:2px;background:#303030"></div>
<div class="a" style="left:633.00px;top:284.4px;width:1.1px;height:2px;background:#303030"></div>
<div class="a" style="left:635.00px;top:284.4px;width:1.1px;height:2px;background:#303030"></div>
<div class="a" style="left:637.00px;top:284.4px;width:1.1px;height:2px;background:#303030"></div>
<div class="a" style="left:639.00px;top:284.4px;width:1.1px;height:2px;background:#303030"></div>
<div class="a" style="left:641.00px;top:284.4px;width:1.1px;height:2px;background:#303030"></div>
<div class="a" style="left:643.00px;top:284.4px;width:1.1px;height:2px;background:#303030"></div>
<div class="a" style="left:645.00px;top:284.4px;width:1.1px;height:2px;background:#303030"></div>
<div class="t" style="left:569.20px;top:291.37px;font-size:9.8px;color:#000;transform:scaleX(0.8280);">Amplitude Mixer-OUT</div>
<div class="a" style="left:568.8px;top:303.6px;width:73px;height:7.6px;background:#fafafa;border:1px solid;border-color:#7c7c7c #fcfcfc #fcfcfc #7c7c7c"></div>
<div class="a" style="left:643.1999999999999px;top:302.0px;width:3.4px;height:11.5px;background:#f0f0f0;border:1px solid;border-color:#fff #5c5c5c #5c5c5c #fff;border-radius:0 0 1.5px 1.5px"></div>
<div class="a" style="left:571.00px;top:315.6px;width:1.1px;height:2px;background:#303030"></div>
<div class="a" style="left:574.90px;top:315.6px;width:1.1px;height:2px;background:#303030"></div>
<div class="a" style="left:578.80px;top:315.6px;width:1.1px;height:2px;background:#303030"></div>
<div class="a" style="left:582.70px;top:315.6px;width:1.1px;height:2px;background:#303030"></div>
<div class="a" style="left:586.60px;top:315.6px;width:1.1px;height:2px;background:#303030"></div>
<div class="a" style="left:590.50px;top:315.6px;width:1.1px;height:2px;background:#303030"></div>
<div class="a" style="left:594.40px;top:315.6px;width:1.1px;height:2px;background:#303030"></div>
<div class="a" style="left:598.30px;top:315.6px;width:1.1px;height:2px;background:#303030"></div>
<div class="a" style="left:602.20px;top:315.6px;width:1.1px;height:2px;background:#303030"></div>
<div class="a" style="left:606.10px;top:315.6px;width:1.1px;height:2px;background:#303030"></div>
<div class="a" style="left:610.00px;top:315.6px;width:1.1px;height:2px;background:#303030"></div>
<div class="a" style="left:613.90px;top:315.6px;width:1.1px;height:2px;background:#303030"></div>
<div class="a" style="left:617.80px;top:315.6px;width:1.1px;height:2px;background:#303030"></div>
<div class="a" style="left:621.70px;top:315.6px;width:1.1px;height:2px;background:#303030"></div>
<div class="a" style="left:625.60px;top:315.6px;width:1.1px;height:2px;background:#303030"></div>
<div class="a" style="left:629.50px;top:315.6px;width:1.1px;height:2px;background:#303030"></div>
<div class="a" style="left:633.40px;top:315.6px;width:1.1px;height:2px;background:#303030"></div>
<div class="a" style="left:637.30px;top:315.6px;width:1.1px;height:2px;background:#303030"></div>
<div class="a" style="left:641.20px;top:315.6px;width:1.1px;height:2px;background:#303030"></div>
<div class="a" style="left:645.10px;top:315.6px;width:1.1px;height:2px;background:#303030"></div>
<div class="t" style="left:570.80px;top:324.87px;font-size:9.8px;color:#000;transform:scaleX(0.8025);">Signal - Form</div>
<div class="a" style="left:568.8px;top:336.4px;width:80px;height:14.4px;background:#fff;border:1px solid;border-color:#6c6c6c #e4e4e4 #e4e4e4 #6c6c6c;box-shadow:inset 1px 1px 0 #9a9a9a"></div>
<div class="t" style="left:571.80px;top:338.97px;font-size:9.8px;color:#000;transform:scaleX(0.8240);">Sinus</div>
<div class="a" style="left:633px;top:338px;width:14.4px;height:11.8px;background:#f0f0f0;border:1px solid;border-color:#fff #6c6c6c #6c6c6c #fff"></div>
<div class="a" style="left:636.8px;top:342.4px;width:0;height:0;border-left:3.4px solid transparent;border-right:3.4px solid transparent;border-top:3.6px solid #000"></div>
<div class="btn" style="left:598.2px;top:351.8px;width:49.6px;height:12.8px"></div>
<div class="t" style="left:602.80px;top:354.07px;font-size:9.8px;color:#000;transform:scaleX(0.8331);">User Signal</div>
<div class="a" style="left:572px;top:376px;width:16px;height:9.8px;background:#a9ada9;border:2px solid #3a3a3a;box-shadow:inset 1px 1px 0 #8a8a8a"></div>
<div class="btn" style="left:598.8px;top:375.2px;width:49.4px;height:12.6px"></div>
<div class="t" style="left:608.20px;top:376.87px;font-size:9.8px;color:#000;transform:scaleX(0.8713);">Ein /Aus</div>
<div class="t" style="left:160.80px;top:396.87px;font-size:9.6px;font-weight:bold;color:#000;transform:scaleX(0.9525);">Zeit-Basis</div>
<div class="t" style="left:213.80px;top:396.87px;font-size:9.6px;font-weight:bold;color:#000;transform:scaleX(0.9587);">Y - Zoom</div>
<div class="t" style="left:268.40px;top:396.87px;font-size:9.6px;font-weight:bold;color:#000;transform:scaleX(0.9940);">Line- IN Pegel</div>
<div class="t" style="left:348.00px;top:396.87px;font-size:9.6px;font-weight:bold;color:#000;transform:scaleX(0.9219);">Trigger</div>
<div class="t" style="left:390.80px;top:396.87px;font-size:9.6px;font-weight:bold;color:#000;transform:scaleX(0.9257);">Kanal</div>
<div class="t" style="left:432.50px;top:396.87px;font-size:9.6px;font-weight:bold;color:#000;transform:scaleX(0.9509);">Anzeige</div>
<div class="t" style="left:478.80px;top:396.87px;font-size:9.6px;font-weight:bold;color:#000;transform:scaleX(0.9169);">Tempo</div>
<div class="a" style="left:168.4px;top:418px;width:29.8px;height:15.2px;background:#eaeaea;border:1px solid #a8a8a8;border-radius:1.5px"></div>
<div class="a" style="left:169.8px;top:419.2px;width:10.7px;height:12.799999999999999px;background:linear-gradient(90deg,#f4f8f4,#b4d2b8);border:1.6px solid #2c2c2c;border-radius:5px 1px 1px 5px"></div>
<div class="a" style="left:180.70000000000002px;top:419.2px;width:5.2px;height:12.799999999999999px;background:#f8f8f8;border:1.4px solid #2c2c2c"></div>
<div class="a" style="left:186.10000000000002px;top:419.2px;width:10.7px;height:12.799999999999999px;background:linear-gradient(90deg,#a8a8a8,#e4e4e4);border:1.6px solid #2c2c2c;border-radius:1px 5px 5px 1px"></div>
<div class="a" style="left:172.8px;top:422.1px;width:0;height:0;border-top:3.5px solid transparent;border-bottom:3.5px solid transparent;border-right:4.6px solid #1c7a34"></div>
<div class="a" style="left:189.00000000000003px;top:422.1px;width:0;height:0;border-top:3.5px solid transparent;border-bottom:3.5px solid transparent;border-left:4.6px solid #c4c4c4"></div>
<div class="a" style="left:216.4px;top:418px;width:30.4px;height:15.2px;background:#4a4a4a;border:1px solid #3a3a3a;border-radius:1.5px"></div>
<div class="a" style="left:217.8px;top:419.2px;width:11.0px;height:12.799999999999999px;background:linear-gradient(90deg,#f4f8f4,#b4d2b8);border:1.6px solid #2c2c2c;border-radius:5px 1px 1px 5px"></div>
<div class="a" style="left:229.0px;top:419.2px;width:5.2px;height:12.799999999999999px;background:#f8f8f8;border:1.4px solid #2c2c2c"></div>
<div class="a" style="left:234.4px;top:419.2px;width:11.0px;height:12.799999999999999px;background:linear-gradient(90deg,#b4d2b8,#f4f8f4);border:1.6px solid #2c2c2c;border-radius:1px 5px 5px 1px"></div>
<div class="a" style="left:220.8px;top:422.1px;width:0;height:0;border-top:3.5px solid transparent;border-bottom:3.5px solid transparent;border-right:4.6px solid #1c7a34"></div>
<div class="a" style="left:237.60000000000002px;top:422.1px;width:0;height:0;border-top:3.5px solid transparent;border-bottom:3.5px solid transparent;border-left:4.6px solid #1c7a34"></div>
<div class="a" style="left:267.2px;top:419.2px;width:67.4px;height:7.6px;background:#fafafa;border:1px solid;border-color:#7c7c7c #fcfcfc #fcfcfc #7c7c7c"></div>
<div class="a" style="left:303.4px;top:417.59999999999997px;width:3.4px;height:12px;background:#f0f0f0;border:1px solid;border-color:#fff #5c5c5c #5c5c5c #fff;border-radius:0 0 1.5px 1.5px"></div>
<div class="a" style="left:270.00px;top:432px;width:1.1px;height:2.8px;background:#303030"></div>
<div class="a" style="left:273.94px;top:432px;width:1.1px;height:2.8px;background:#303030"></div>
<div class="a" style="left:277.88px;top:432px;width:1.1px;height:2.8px;background:#303030"></div>
<div class="a" style="left:281.82px;top:432px;width:1.1px;height:2.8px;background:#303030"></div>
<div class="a" style="left:285.76px;top:432px;width:1.1px;height:2.8px;background:#303030"></div>
<div class="a" style="left:289.70px;top:432px;width:1.1px;height:2.8px;background:#303030"></div>
<div class="a" style="left:293.64px;top:432px;width:1.1px;height:2.8px;background:#303030"></div>
<div class="a" style="left:297.58px;top:432px;width:1.1px;height:2.8px;background:#303030"></div>
<div class="a" style="left:301.52px;top:432px;width:1.1px;height:2.8px;background:#303030"></div>
<div class="a" style="left:305.46px;top:432px;width:1.1px;height:2.8px;background:#303030"></div>
<div class="a" style="left:309.40px;top:432px;width:1.1px;height:2.8px;background:#303030"></div>
<div class="a" style="left:313.34px;top:432px;width:1.1px;height:2.8px;background:#303030"></div>
<div class="a" style="left:317.28px;top:432px;width:1.1px;height:2.8px;background:#303030"></div>
<div class="a" style="left:321.22px;top:432px;width:1.1px;height:2.8px;background:#303030"></div>
<div class="a" style="left:325.16px;top:432px;width:1.1px;height:2.8px;background:#303030"></div>
<div class="a" style="left:329.10px;top:432px;width:1.1px;height:2.8px;background:#303030"></div>
<div class="a" style="left:333.04px;top:432px;width:1.1px;height:2.8px;background:#303030"></div>
<div class="a" style="left:340.8px;top:418px;width:3.4px;height:8.4px;background:#bcbcbc;border:1px solid #d6d6d6"></div>
<div class="a" style="left:353px;top:412px;width:15px;height:18px;background:#f4f4f4;border:1px solid;border-color:#a6a6a6 #fcfcfc #fcfcfc #a6a6a6"></div>
<svg class="a" style="left:352.5px;top:413px" width="16" height="8" viewBox="0 0 16 8"><path d="M.3 3.8 Q8.0 -1.2 15.7 3.8 Q8.0 9.4 .3 3.8Z" fill="#fdfdfd" stroke="#8c988c" stroke-width=".8"/><path d="M.8 4.6 Q8.0 9 15.2 4.6" fill="none" stroke="#3c9a3c" stroke-width=".9"/><path d="M3.2 3.8 H12.8" stroke="#14601a" stroke-width="2" stroke-linecap="round"/></svg>
<div class="a" style="left:394.5px;top:412px;width:14.5px;height:26px;background:#f4f4f4;border:1px solid;border-color:#a6a6a6 #fcfcfc #fcfcfc #a6a6a6"></div>
<svg class="a" style="left:394.0px;top:413px" width="15.5" height="8" viewBox="0 0 15.5 8"><path d="M.3 3.8 Q7.75 -1.2 15.2 3.8 Q7.75 9.4 .3 3.8Z" fill="#fdfdfd" stroke="#8c988c" stroke-width=".8"/><path d="M.8 4.6 Q7.75 9 14.7 4.6" fill="none" stroke="#3c9a3c" stroke-width=".9"/><path d="M3.2 3.8 H12.3" stroke="#14601a" stroke-width="2" stroke-linecap="round"/></svg>
<div class="a" style="left:433.6px;top:412px;width:15px;height:26px;background:#f4f4f4;border:1px solid;border-color:#a6a6a6 #fcfcfc #fcfcfc #a6a6a6"></div>
<svg class="a" style="left:433.1px;top:413.5px" width="16" height="8" viewBox="0 0 16 8"><path d="M.3 3.8 Q8.0 -1.2 15.7 3.8 Q8.0 9.4 .3 3.8Z" fill="#fdfdfd" stroke="#8c988c" stroke-width=".8"/><path d="M.8 4.6 Q8.0 9 15.2 4.6" fill="none" stroke="#3c9a3c" stroke-width=".9"/><path d="M3.2 3.8 H12.8" stroke="#14601a" stroke-width="2" stroke-linecap="round"/></svg>
<div class="a" style="left:480px;top:412px;width:14px;height:26px;background:#f4f4f4;border:1px solid;border-color:#a6a6a6 #fcfcfc #fcfcfc #a6a6a6"></div>
<svg class="a" style="left:479.5px;top:422px" width="15" height="8" viewBox="0 0 15 8"><path d="M.3 3.8 Q7.5 -1.2 14.7 3.8 Q7.5 9.4 .3 3.8Z" fill="#fdfdfd" stroke="#8c988c" stroke-width=".8"/><path d="M.8 4.6 Q7.5 9 14.2 4.6" fill="none" stroke="#3c9a3c" stroke-width=".9"/><path d="M3.2 3.8 H11.8" stroke="#14601a" stroke-width="2" stroke-linecap="round"/></svg>
<div class="t" style="left:369.50px;top:411.17px;font-size:9.2px;color:#000;transform:scaleX(0.9250);">Ein</div>
<div class="t" style="left:369.50px;top:422.37px;font-size:9.2px;color:#000;transform:scaleX(0.9020);">Aus</div>
<div class="t" style="left:411.20px;top:411.17px;font-size:9.2px;color:#000;transform:scaleX(0.8503);">li+re</div>
<div class="t" style="left:411.20px;top:421.57px;font-size:9.2px;color:#000;transform:scaleX(0.7526);">li.</div>
<div class="t" style="left:411.20px;top:430.97px;font-size:9.2px;color:#000;transform:scaleX(0.8196);">re.</div>
<div class="t" style="left:450.80px;top:412.87px;font-size:9.2px;color:#000;transform:scaleX(0.8231);">Linie</div>
<div class="t" style="left:450.80px;top:421.57px;font-size:9.2px;color:#000;transform:scaleX(0.9011);">Punkt</div>
<div class="t" style="left:450.80px;top:430.37px;font-size:9.2px;color:#000;transform:scaleX(0.8475);">voll</div>
<div class="t" style="left:498.00px;top:409.87px;font-size:9.2px;color:#000;transform:scaleX(0.9009);">schnell</div>
<div class="t" style="left:498.00px;top:418.77px;font-size:9.2px;color:#000;transform:scaleX(0.8534);">normal</div>
<div class="t" style="left:498.00px;top:427.97px;font-size:9.2px;color:#000;transform:scaleX(0.8679);">träge</div>
<div class="btn" style="left:536px;top:406.4px;width:47px;height:15px"></div>
<div class="t" style="left:544.00px;top:409.47px;font-size:9.8px;color:#000;transform:scaleX(0.8510);">anhalten</div>
<div class="btn" style="left:537px;top:426px;width:46px;height:14px;box-shadow:0 0 0 1px #1a1a1a"></div>
<div class="t" style="left:542.60px;top:428.47px;font-size:9.8px;color:#000;transform:scaleX(0.8440);">schließen</div>
<div class="btn" style="left:600px;top:405.6px;width:50.4px;height:15px"></div>
<div class="t" style="left:608.00px;top:408.07px;font-size:9.8px;color:#000;transform:scaleX(0.8201);">Clipboard</div>
<div class="btn" style="left:600px;top:424.4px;width:50.4px;height:15px"></div>
<div class="t" style="left:609.60px;top:427.07px;font-size:9.8px;color:#000;transform:scaleX(0.8769);">Drucken</div>
<div class="tb" style="left:164.8px"></div>
<div class="t" style="left:192.60px;top:575.36px;font-size:14px;color:#c8d4e4;transform:scaleX(0.9331);">Vis<span style="opacity:.55">...</span></div>
<svg class="a" style="left:175.8px;top:576.4px" width="13" height="12" viewBox="0 0 13 12"><path d="M1 1.2 l3 .2 l1.4 2.6 l-2.6 .4 z" fill="#e8e8f0"/><path d="M1.4 1 l2 .3 l.2 1.4 z" fill="#d03030"/><circle cx="7.2" cy="6.6" r="4.9" fill="#0c2c70"/><circle cx="7.2" cy="6.4" r="4.1" fill="#1448b0"/><ellipse cx="8" cy="4.9" rx="2.3" ry="1.5" fill="#48b4ec"/><path d="M3 8.6 q4.2 3 8.4 -.4 q-3.6 4.8 -8.4 .4z" fill="#081c48"/></svg>
<div class="tb" style="left:241.4px"></div>
<div class="t" style="left:269.15px;top:575.36px;font-size:14px;color:#c8d4e4;transform:scaleX(0.9067);">Filt<span style="opacity:.55">...</span></div>
<svg class="a" style="left:252.35000000000002px;top:576.4px" width="13" height="12" viewBox="0 0 13 12"><path d="M1 1.2 l3 .2 l1.4 2.6 l-2.6 .4 z" fill="#e8e8f0"/><path d="M1.4 1 l2 .3 l.2 1.4 z" fill="#d03030"/><circle cx="7.2" cy="6.6" r="4.9" fill="#0c2c70"/><circle cx="7.2" cy="6.4" r="4.1" fill="#1448b0"/><ellipse cx="8" cy="4.9" rx="2.3" ry="1.5" fill="#48b4ec"/><path d="M3 8.6 q4.2 3 8.4 -.4 q-3.6 4.8 -8.4 .4z" fill="#081c48"/></svg>
<div class="tb" style="left:317.9px"></div>
<div class="t" style="left:345.70px;top:575.36px;font-size:14px;color:#c8d4e4;transform:scaleX(1.0032);">BO<span style="opacity:.55">...</span></div>
<svg class="a" style="left:328.4px;top:576px" width="13" height="13" viewBox="0 0 13 13"><rect x="1" y="1" width="7" height="11" fill="#e8d020" stroke="#403008" stroke-width=".8"/><rect x="2.4" y="2.4" width="3" height="3" fill="#2a2a2a"/><circle cx="8" cy="7.4" r="3.8" fill="#d82020"/><path d="M5 9.5h6" stroke="#801010" stroke-width="1"/></svg>
<div class="tb" style="left:394.4px"></div>
<div class="t" style="left:422.25px;top:575.36px;font-size:14px;color:#c8d4e4;transform:scaleX(0.9911);">37<span style="opacity:.55">...</span></div>
<svg class="a" style="left:407.4px;top:579px" width="12" height="10" viewBox="0 0 12 10"><rect x="0.5" y="5" width="3.4" height="3.4" fill="#9aa6b8"/><rect x="4" y="1" width="3.6" height="3.6" fill="#c8d0dc"/><rect x="6.6" y="4.6" width="4.4" height="4.4" fill="#58b020"/></svg>
<div class="tb" style="left:471.0px"></div>
<div class="t" style="left:498.80px;top:575.36px;font-size:14px;color:#c8d4e4;transform:scaleX(0.9331);">Vis<span style="opacity:.55">...</span></div>
<svg class="a" style="left:482.0px;top:576.4px" width="13" height="12" viewBox="0 0 13 12"><path d="M1 1.2 l3 .2 l1.4 2.6 l-2.6 .4 z" fill="#e8e8f0"/><path d="M1.4 1 l2 .3 l.2 1.4 z" fill="#d03030"/><circle cx="7.2" cy="6.6" r="4.9" fill="#0c2c70"/><circle cx="7.2" cy="6.4" r="4.1" fill="#1448b0"/><ellipse cx="8" cy="4.9" rx="2.3" ry="1.5" fill="#48b4ec"/><path d="M3 8.6 q4.2 3 8.4 -.4 q-3.6 4.8 -8.4 .4z" fill="#081c48"/></svg>
<div class="tb" style="left:547.5px;background:linear-gradient(#7b93b2,#56749a 45%,#3f5f88 55%,#46668e);border-color:#8aa0bc #6f88a8 #6f88a8 #8aa0bc"></div>
<div class="t" style="left:575.35px;top:575.36px;font-size:14px;color:#c8d4e4;transform:scaleX(1.0123);">HB<span style="opacity:.55">...</span></div>
<svg class="a" style="left:557.5px;top:575.5px" width="14" height="13" viewBox="0 0 14 13"><rect x="2.4" y="1" width="10.6" height="11" fill="#30c8e8"/><rect x="4" y="7" width="8" height="4" fill="#1c98d0"/><path d="M1 4.6 l3.4 -2.6 v1.6 h2.4 v2.2 h-2.4 v1.6z" fill="#e02828"/><path d="M4 11.4h9" stroke="#fff" stroke-width=".8" stroke-dasharray="1 1"/></svg>
<div class="tb" style="left:624.1px"></div>
<div class="t" style="left:651.90px;top:575.36px;font-size:14px;color:#c8d4e4;transform:scaleX(1.0147);">Un<span style="opacity:.55">...</span></div>
<svg class="a" style="left:635.1px;top:575.5px" width="12" height="13" viewBox="0 0 12 13"><rect x="1" y=".8" width="8.6" height="11.4" fill="#e8ecf4" stroke="#6878a0" stroke-width=".8"/><rect x="2.2" y="2" width="4" height="4.4" fill="#2038b0"/><path d="M2.4 8h6M2.4 10h6" stroke="#7080a8" stroke-width=".9"/><rect x="7.6" y="5" width="3.4" height="3.4" fill="#c83030"/></svg>
<div class="t" style="left:756.00px;top:575.86px;font-size:14.2px;color:#dce6f2;transform:scaleX(0.8724);">22:58</div>
<div class="a" style="left:15.6px;top:569.3px;width:28px;height:27.2px;border-radius:50%;background:radial-gradient(circle at 50% 102%,#44ccf4 0%,#2284d4 26%,rgba(20,70,150,0) 58%),radial-gradient(circle at 50% 14%,#9cb6d0,#47719f 34%,#123a78 62%,#0b2a5c);box-shadow:0 0 2px #0a1c3c"></div>
<svg class="a" style="left:18px;top:570px" width="24" height="24" viewBox="18 570 24 24"><path d="M23.6 576.2 q3.2 -1.9 6.4 -.7 l-.9 5.6 q-3.1 -1.1 -6.5 .5z" fill="#e85a2c"/><path d="M31.4 577.6 q3 1.3 6.2 -.5 l-1 5.8 q-3 1.7 -6.2 .4z" fill="#8cc83c"/><path d="M22 582.9 q3.2 -1.7 6.4 -.5 l-1 5.8 q-3 -1.1 -6.4 .5z" fill="#3ca0ec"/><path d="M29.6 584 q3 1.3 6.2 -.3 l-1 5.8 q-3 1.5 -6.2 .3z" fill="#f4c62c"/></svg>
<svg class="a" style="left:64px;top:575px" width="14" height="13" viewBox="0 0 14 13"><path d="M2 2.4 l9.6 -1.6 l.8 9.4 l-9.2 2z" fill="#d4e8fa"/><circle cx="7" cy="6.6" r="3.6" fill="none" stroke="#2a6cd0" stroke-width="1.7"/><path d="M4 6.6h6" stroke="#2a6cd0" stroke-width="1.3"/><rect x="8.6" y="7.4" width="3" height="2" fill="#d4e8fa"/></svg>
<svg class="a" style="left:82px;top:578px" width="15" height="11" viewBox="0 0 15 11"><circle cx="3.8" cy="8" r="1.9" fill="#2c4c9c"/><rect x="5.8" y="1.6" width="3.8" height="3.8" rx=".8" fill="#9cacc4"/><circle cx="12.2" cy="8" r="2.1" fill="#84c424"/></svg>
<svg class="a" style="left:101px;top:576px" width="14" height="13" viewBox="0 0 14 13"><rect x=".5" y=".6" width="12.4" height="11.4" fill="#262626"/><path d="M6.7 1.8 q4 0 4 3.8 q0 2 -1.4 2.6 v2.2 h-5.2 v-2.2 q-1.4 -.6 -1.4 -2.6 q0 -3.8 4 -3.8z" fill="#c8c8c8"/><circle cx="5" cy="5.8" r="1.1" fill="#333"/><circle cx="8.4" cy="5.8" r="1.1" fill="#333"/><path d="M6.7 7v1.4" stroke="#444" stroke-width=".8"/></svg>
<svg class="a" style="left:119.4px;top:575.8px" width="13" height="12" viewBox="0 0 13 12"><path d="M1 1.2 l3 .2 l1.4 2.6 l-2.6 .4 z" fill="#e8e8f0"/><path d="M1.4 1 l2 .3 l.2 1.4 z" fill="#d03030"/><circle cx="7.2" cy="6.6" r="4.9" fill="#0c2c70"/><circle cx="7.2" cy="6.4" r="4.1" fill="#1448b0"/><ellipse cx="8" cy="4.9" rx="2.3" ry="1.5" fill="#48b4ec"/><path d="M3 8.6 q4.2 3 8.4 -.4 q-3.6 4.8 -8.4 .4z" fill="#081c48"/></svg>
<div class="t" style="left:151.80px;top:568.77px;font-size:11px;font-weight:bold;color:#e4ecf6;transform:scaleX(1.1442);">»</div>
<div class="a" style="left:709.2px;top:581px;width:0;height:0;border-left:2.9px solid transparent;border-right:2.9px solid transparent;border-bottom:3.2px solid #e4ecf6"></div>
<svg class="a" style="left:721.5px;top:570px" width="11" height="11" viewBox="0 0 11 11"><rect x=".3" y=".3" width="10.4" height="10.4" fill="#4a4a4a"/><path d="M5.5 1.2 q3.6 0 3.6 3.4 q0 1.8 -1.2 2.4 v2.6 h-4.8 v-2.6 q-1.2 -.6 -1.2 -2.4 q0 -3.4 3.6 -3.4z" fill="#d8d8d4"/><circle cx="4" cy="5" r="1" fill="#333"/><circle cx="7" cy="5" r="1" fill="#333"/></svg>
<svg class="a" style="left:735.8px;top:570px" width="12" height="11" viewBox="0 0 12 11"><rect x=".3" y=".3" width="11" height="10.4" fill="#d4dce4"/><path d="M.6 .6 h6.4 l-1.6 4 l2.6 1 l-7.4 4.6z" fill="#e02c2c"/><path d="M10.8 1 l-8 9" stroke="#c02020" stroke-width="1.3"/><rect x="7.4" y="7" width="3.6" height="2.6" fill="#283040"/></svg>
<svg class="a" style="left:722px;top:584px" width="11" height="11" viewBox="0 0 11 11"><path d="M1.4 11v-3M4 11v-5.4M6.6 11v-8M9.2 11v-10.6" stroke="#1ec81e" stroke-width="2"/></svg>
<div class="a" style="left:736px;top:584px;width:11px;height:11px;background:#b4b2a8"></div>
<div class="t" style="left:738.40px;top:584.77px;font-size:10px;font-weight:bold;color:#dcdad0;transform:scaleX(0.8585);">A</div>
</div></body></html>
